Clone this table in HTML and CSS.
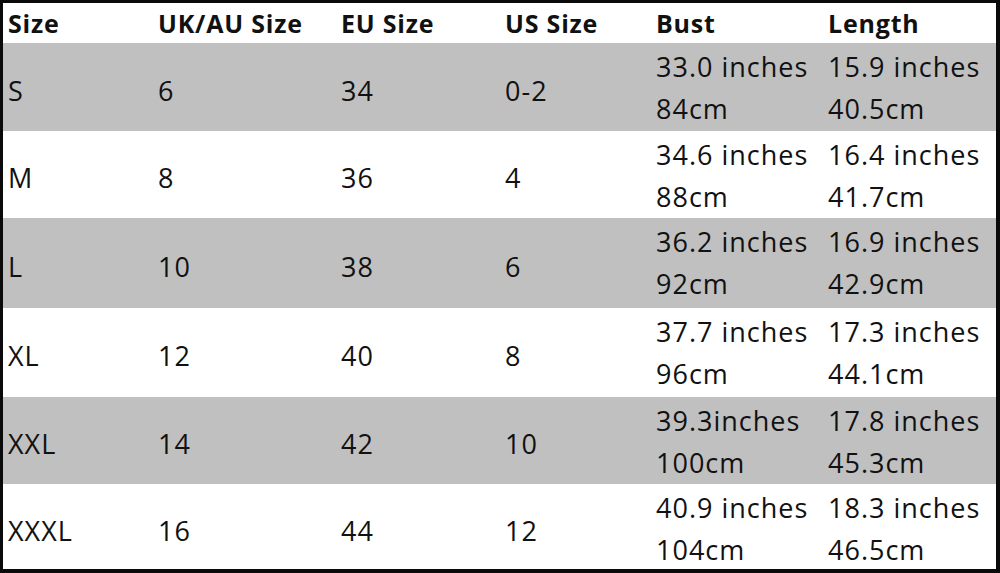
FILE: index.html
```html
<!DOCTYPE html>
<html>
<head>
<meta charset="utf-8">
<link rel="stylesheet" href="styles.css">
</head>
<body>
<div class="chart">
  <div class="row head">
    <div class="cell">Size</div><div class="cell">UK/AU Size</div><div class="cell">EU Size</div><div class="cell">US Size</div><div class="cell">Bust</div><div class="cell">Length</div>
  </div>
  <div class="row gray">
    <div class="cell one">S</div><div class="cell one">6</div><div class="cell one">34</div><div class="cell one">0-2</div>
    <div class="cell two"><span>33.0 inches</span><span>84cm</span></div><div class="cell two"><span>15.9 inches</span><span>40.5cm</span></div>
  </div>
  <div class="row">
    <div class="cell one">M</div><div class="cell one">8</div><div class="cell one">36</div><div class="cell one">4</div>
    <div class="cell two"><span>34.6 inches</span><span>88cm</span></div><div class="cell two"><span>16.4 inches</span><span>41.7cm</span></div>
  </div>
  <div class="row gray">
    <div class="cell one">L</div><div class="cell one">10</div><div class="cell one">38</div><div class="cell one">6</div>
    <div class="cell two"><span>36.2 inches</span><span>92cm</span></div><div class="cell two"><span>16.9 inches</span><span>42.9cm</span></div>
  </div>
  <div class="row">
    <div class="cell one">XL</div><div class="cell one">12</div><div class="cell one">40</div><div class="cell one">8</div>
    <div class="cell two"><span>37.7 inches</span><span>96cm</span></div><div class="cell two"><span>17.3 inches</span><span>44.1cm</span></div>
  </div>
  <div class="row gray">
    <div class="cell one">XXL</div><div class="cell one">14</div><div class="cell one">42</div><div class="cell one">10</div>
    <div class="cell two"><span>39.3inches</span><span>100cm</span></div><div class="cell two"><span>17.8 inches</span><span>45.3cm</span></div>
  </div>
  <div class="row last">
    <div class="cell one">XXXL</div><div class="cell one">16</div><div class="cell one">44</div><div class="cell one">12</div>
    <div class="cell two"><span>40.9 inches</span><span>104cm</span></div><div class="cell two"><span>18.3 inches</span><span>46.5cm</span></div>
  </div>
</div>
</body>
</html>
```
FILE: styles.css
```css
html, body {
  margin: 0;
  padding: 0;
  background: #000;
}
.chart {
  width: 1000px;
  height: 573px;
  box-sizing: border-box;
  background: #fff;
  border-style: solid;
  border-color: #0a0a0a;
  border-width: 3px 4px 4px 3px;
  font-family: "Open Sans", "Liberation Sans", sans-serif;
  color: #111;
  display: grid;
  grid-template-rows: 40px 88px 87px 90px 89px 87px 85px;
  overflow: hidden;
}
.row {
  display: grid;
  grid-template-columns: 150px 183px 164px 151px 172px 173px;
}
.row.gray {
  background: #c0c0c0;
}
.cell {
  padding-left: 5px;
  font-size: 27px;
  white-space: nowrap;
  letter-spacing: 1px;
}
.head .cell {
  font-weight: 700;
  line-height: 40px;
  font-size: 25px;
  letter-spacing: 0.8px;
}
.cell.one {
  display: flex;
  align-items: center;
  padding-top: 6px;
}
.cell.two {
  display: flex;
  flex-direction: column;
  padding-top: 3px;
  line-height: 42px;
}
```
